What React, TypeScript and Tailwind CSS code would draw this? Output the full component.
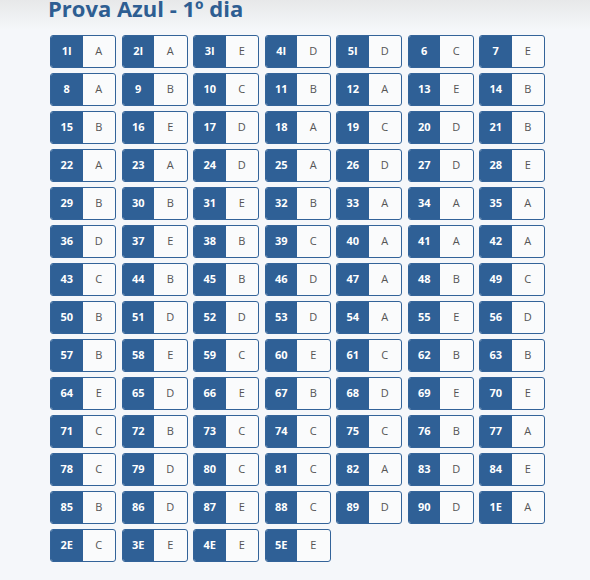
import React from "react";

const rows: string[] = [
  "1I A,2I A,3I E,4I D,5I D,6 C,7 E",
  "8 A,9 B,10 C,11 B,12 A,13 E,14 B",
  "15 B,16 E,17 D,18 A,19 C,20 D,21 B",
  "22 A,23 A,24 D,25 A,26 D,27 D,28 E",
  "29 B,30 B,31 E,32 B,33 A,34 A,35 A",
  "36 D,37 E,38 B,39 C,40 A,41 A,42 A",
  "43 C,44 B,45 B,46 D,47 A,48 B,49 C",
  "50 B,51 D,52 D,53 D,54 A,55 E,56 D",
  "57 B,58 E,59 C,60 E,61 C,62 B,63 B",
  "64 E,65 D,66 E,67 B,68 D,69 E,70 E",
  "71 C,72 B,73 C,74 C,75 C,76 B,77 A",
  "78 C,79 D,80 C,81 C,82 A,83 D,84 E",
  "85 B,86 D,87 E,88 C,89 D,90 D,1E A",
  "2E C,3E E,4E E,5E E",
];

const items = rows.join(",").split(",").map((s) => {
  const [n, a] = s.split(" ");
  return { n, a };
});

export default function App() {
  return (
    <div
      className="relative w-[590px] h-[580px] overflow-hidden bg-[#f5f7fa]"
      style={{ fontFamily: '"Open Sans", "Noto Sans", sans-serif' }}
    >
      <div className="absolute left-0 top-0 w-full h-[30px] bg-gradient-to-b from-[#e7e8e9] to-transparent pointer-events-none" />
      <div className="relative pl-[50px]">
        <h1 className="ml-[-2px] mt-[-3px] text-[22px] leading-[22px] font-bold text-[#2e5e92]">
          Prova Azul - 1º dia
        </h1>
        <div className="mt-[16px] grid grid-cols-[repeat(7,66px)] gap-x-[5.5px] gap-y-[5px]">
          {items.map((it) => (
            <div
              key={it.n}
              className="flex h-[33px] rounded-[3px] border-[1.5px] border-[#336399] overflow-hidden bg-[#fafbfc]"
            >
              <div className="w-[31.5px] flex items-center justify-center bg-[#2f6096] text-white text-[11px] font-bold">
                {it.n}
              </div>
              <div className="flex-1 flex items-center justify-center text-[11px] text-[#555]">
                {it.a}
              </div>
            </div>
          ))}
        </div>
      </div>
    </div>
  );
}
